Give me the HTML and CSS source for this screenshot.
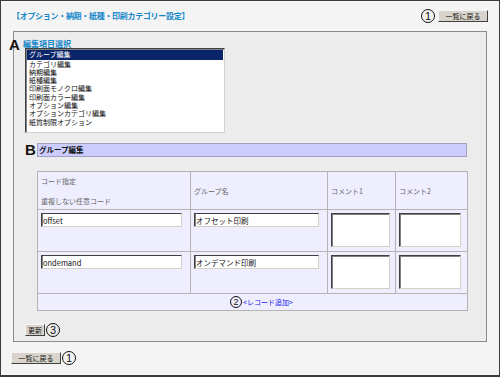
FILE: index.html
```html
<!DOCTYPE html>
<html lang="ja">
<head>
<meta charset="utf-8">
<link rel="stylesheet" href="styles.css">
</head>
<body>
<div class="frame">
  <div class="top">
    <div class="title">【オプション・納期・紙種・印刷カテゴリー設定】</div>
    <div class="topright"><span class="num">1</span><button class="btn btn-back">一覧に戻る</button></div>
  </div>
  <div class="panel">
    <span class="mark mark-a">A</span>
    <div class="label">編集項目選択</div>
    <ul class="listbox">
      <li class="sel">グループ編集</li>
      <li>カテゴリ編集</li>
      <li>納期編集</li>
      <li>紙種編集</li>
      <li>印刷面モノクロ編集</li>
      <li>印刷面カラー編集</li>
      <li>オプション編集</li>
      <li>オプションカテゴリ編集</li>
      <li>紙質制限オプション</li>
    </ul>
    <div class="brow">
      <span class="mark">B</span>
      <div class="bar">グループ編集</div>
    </div>
    <table class="grid">
      <tr class="head">
        <td class="c1"><div class="h1">コード指定</div><div class="h2">重複しない任意コード</div></td>
        <td class="c2">グループ名</td>
        <td class="c3">コメント1</td>
        <td class="c4">コメント2</td>
      </tr>
      <tr class="row">
        <td><input class="in in1" type="text" value="offset"></td>
        <td><input class="in in2" type="text" value="オフセット印刷"></td>
        <td><textarea class="ta ta1"></textarea></td>
        <td><textarea class="ta ta2"></textarea></td>
      </tr>
      <tr class="row">
        <td><input class="in in1" type="text" value="ondemand"></td>
        <td><input class="in in2" type="text" value="オンデマンド印刷"></td>
        <td><textarea class="ta ta1"></textarea></td>
        <td><textarea class="ta ta2"></textarea></td>
      </tr>
      <tr class="addrow">
        <td colspan="4"><span class="num">2</span><a class="add" href="#">&lt;レコード追加&gt;</a></td>
      </tr>
    </table>
    <div class="updrow"><button class="btn btn-upd">更新</button><span class="num">3</span></div>
  </div>
  <div class="bottom"><button class="btn btn-back">一覧に戻る</button><span class="num">1</span></div>
</div>
</body>
</html>
```

FILE: styles.css
```css
* { box-sizing: border-box; }
html, body { margin: 0; padding: 0; }
body {
  font-family: "Noto Sans CJK JP", "DejaVu Sans", sans-serif;
  font-size: 8px;
  background: #f4f4f4;
}
.frame {
  width: 500px;
  height: 377px;
  border: 1px solid #3c3c3c;
  border-bottom-width: 2px;
  background: #f4f4f4;
  overflow: hidden;
}
.top {
  display: flex;
  justify-content: space-between;
  align-items: center;
  margin: 8px 11px 0 11px;
  height: 14px;
}
.title {
  color: #1587c9;
  font-weight: bold;
  font-size: 8px;
  line-height: 10px;
  letter-spacing: -0.3px;
}
.topright { display: flex; align-items: center; gap: 3px; }
.num {
  display: inline-flex;
  align-items: center;
  justify-content: center;
  width: 14px;
  height: 14px;
  border: 1.3px solid #111;
  border-radius: 50%;
  font-family: "Liberation Sans", sans-serif;
  font-size: 11px;
  line-height: 1;
  color: #111;
  background: transparent;
}
.btn {
  display: inline-flex;
  align-items: center;
  justify-content: center;
  padding: 0;
  margin: 0;
  height: 12px;
  background: #d8d4cc;
  border: 1px solid;
  border-color: #f4f4f4 #404040 #404040 #f4f4f4;
  font-family: "Noto Sans CJK JP", sans-serif;
  font-size: 7px;
  line-height: 1;
  color: #111;
}
.btn-back { width: 50px; }
.btn-upd { width: 20px; }
.panel {
  position: relative;
  margin: 8px 0 0 12px;
  width: 474px;
  height: 311px;
  border: 1px solid #8a8a8a;
  background: #ececec;
  padding: 7px 0 0 9px;
}
.mark {
  font-family: "Liberation Sans", sans-serif;
  font-weight: bold;
  font-size: 15px;
  line-height: 12px;
  color: #111;
}
.mark-a {
  position: absolute;
  left: -5px;
  top: 7px;
}
.label {
  color: #1587c9;
  font-weight: bold;
  font-size: 8px;
  line-height: 9px;
}
.listbox {
  list-style: none;
  margin: 0 0 0 2px;
  padding: 1px 1px;
  width: 200px;
  height: 85px;
  background: #fff;
  border: 1px solid;
  border-color: #404040 #d4d0c8 #d4d0c8 #404040;
  box-shadow: inset 1px 1px 0 #808080;
  overflow: hidden;
}
.listbox li {
  height: 8.3px;
  line-height: 8.3px;
  font-size: 7px;
  padding-left: 2px;
  color: #111;
  white-space: nowrap;
  overflow: hidden;
}
.listbox li.sel {
  background: #0a246a;
  color: #fff;
  height: 9.5px;
  line-height: 9.5px;
}
.brow {
  display: flex;
  align-items: center;
  margin: 10px 0 0 2px;
  height: 14px;
}
.brow .mark { width: 12px; }
.bar {
  width: 430px;
  height: 14px;
  background: #ccccff;
  border: 1px solid #a0a0c0;
  font-weight: bold;
  font-size: 7.5px;
  line-height: 12px;
  padding-left: 1px;
  color: #111;
}
.grid {
  margin: 14px 0 0 14px;
  width: 430px;
  border-collapse: collapse;
  border: 1px solid #9a9a9a;
  background: #eeeeff;
  table-layout: fixed;
}
.grid td {
  border: 1px solid #b4b4b4;
  padding: 0 0 0 3px;
  vertical-align: middle;
  color: #666;
  font-size: 7px;
}
.grid .c1 { width: 153px; }
.grid .c2 { width: 137px; }
.grid .c3 { width: 68px; }
.grid .c4 { width: 72px; }
.head { height: 38px; }
.head .c1 { line-height: 10px; }
.h2 { margin-top: 10px; }
.row { height: 42px; }
.row td { vertical-align: top; padding-top: 3px; }
.in {
  display: block;
  height: 14px;
  padding: 0 1px;
  background: #fff;
  border: 1px solid;
  border-color: #404040 #d4d0c8 #d4d0c8 #404040;
  box-shadow: inset 1px 0 0 #808080;
  font-family: "Noto Sans CJK JP", "Liberation Sans", sans-serif;
  font-size: 7.5px;
  color: #111;
  outline: none;
}
.in1 { width: 141px; }
.in2 { width: 125px; }
.ta {
  display: block;
  height: 34px;
  resize: none;
  background: #fff;
  border: 1px solid;
  border-color: #404040 #d4d0c8 #d4d0c8 #404040;
  box-shadow: inset 1px 1px 0 #808080;
  padding: 0;
  margin: 0;
}
.ta1 { width: 59px; }
.ta2 { width: 62px; }
.addrow { height: 17px; }
.addrow td {
  text-align: center;
  padding: 0 0 0 18px;
}
.addrow .num { vertical-align: middle; width: 12px; height: 12px; font-size: 9px; }
.add {
  color: #2020ee;
  text-decoration: none;
  font-size: 7px;
  vertical-align: middle;
  margin-left: 1px;
}
.updrow {
  display: flex;
  align-items: center;
  gap: 1px;
  margin: 12px 0 0 2px;
}
.bottom {
  display: flex;
  align-items: center;
  gap: 1px;
  margin: 9px 0 0 10px;
}
```
